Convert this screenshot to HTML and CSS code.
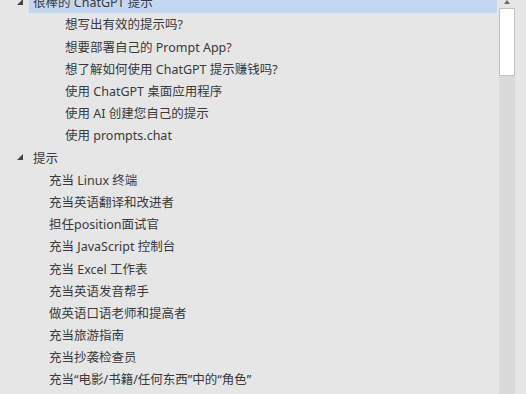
FILE: index.html
```html
<!DOCTYPE html>
<html>
<head>
    <meta charset="UTF-8">
    <title>提示树</title>
    <link rel="stylesheet" href="styles.css">
</head>
<body>
    <div class="pane">
        <div class="tree">
            <div class="row lvl-top">
                <span class="toggle"></span>
                <span class="label selected">很棒的 ChatGPT 提示</span>
            </div>
            <div class="row lvl-deep"><span class="label">想写出有效的提示吗?</span></div>
            <div class="row lvl-deep"><span class="label">想要部署自己的 Prompt App?</span></div>
            <div class="row lvl-deep"><span class="label">想了解如何使用 ChatGPT 提示赚钱吗?</span></div>
            <div class="row lvl-deep"><span class="label">使用 ChatGPT 桌面应用程序</span></div>
            <div class="row lvl-deep"><span class="label">使用 AI 创建您自己的提示</span></div>
            <div class="row lvl-deep"><span class="label">使用 prompts.chat</span></div>
            <div class="row lvl-top">
                <span class="toggle"></span>
                <span class="label">提示</span>
            </div>
            <div class="row lvl-child"><span class="label">充当 Linux 终端</span></div>
            <div class="row lvl-child"><span class="label">充当英语翻译和改进者</span></div>
            <div class="row lvl-child"><span class="label">担任position面试官</span></div>
            <div class="row lvl-child"><span class="label">充当 JavaScript 控制台</span></div>
            <div class="row lvl-child"><span class="label">充当 Excel 工作表</span></div>
            <div class="row lvl-child"><span class="label">充当英语发音帮手</span></div>
            <div class="row lvl-child"><span class="label">做英语口语老师和提高者</span></div>
            <div class="row lvl-child"><span class="label">充当旅游指南</span></div>
            <div class="row lvl-child"><span class="label">充当抄袭检查员</span></div>
            <div class="row lvl-child"><span class="label">充当“电影/书籍/任何东西”中的“角色”</span></div>
        </div>
        <div class="scrollbar">
            <div class="scroll-up"><span class="arrow"></span></div>
            <div class="thumb"></div>
            <div class="track"></div>
        </div>
    </div>
</body>
</html>
```

FILE: styles.css
```css
html, body {margin: 0; padding: 0; height: 100%; overflow: hidden;}
body {background-color: #e6e6e6; font-family: "Noto Sans", "Noto Sans CJK SC", sans-serif; font-size: 12.5px; color: #3a3a3a;}
.pane {display: flex; height: 394px; padding-right: 11px; box-sizing: border-box;}
.tree {flex: 1; margin-top: -9.3px; padding-right: 2px;}
.row {display: flex; align-items: center; height: 22.2px; white-space: nowrap;}
.label {flex: 1; height: 100%; display: flex; align-items: center; padding-left: 4px;}
.label.selected {background-color: #c4d7f2;}
.lvl-top {padding-left: 17px;}
.lvl-deep {padding-left: 61px;}
.lvl-child {padding-left: 45px;}
.toggle {width: 12px; height: 100%; position: relative;}
.toggle::before {content: ""; position: absolute; left: 0; top: 50%; margin-top: -3px; width: 0; height: 0; border-style: solid; border-width: 0 0 6px 6px; border-color: transparent transparent #454545 transparent;}
.scrollbar {width: 16px; display: flex; flex-direction: column;}
.scroll-up {height: 8px; display: flex; justify-content: center; align-items: flex-start;}
.arrow {width: 0; height: 0; border-style: solid; border-width: 0 3.5px 4px 3.5px; border-color: transparent transparent #6a6a6a transparent;}
.thumb {height: 68px; background-color: #ffffff; border: 1px solid #c2c2c2; box-sizing: border-box;}
.track {flex: 1; background-color: #dadada;}
```
